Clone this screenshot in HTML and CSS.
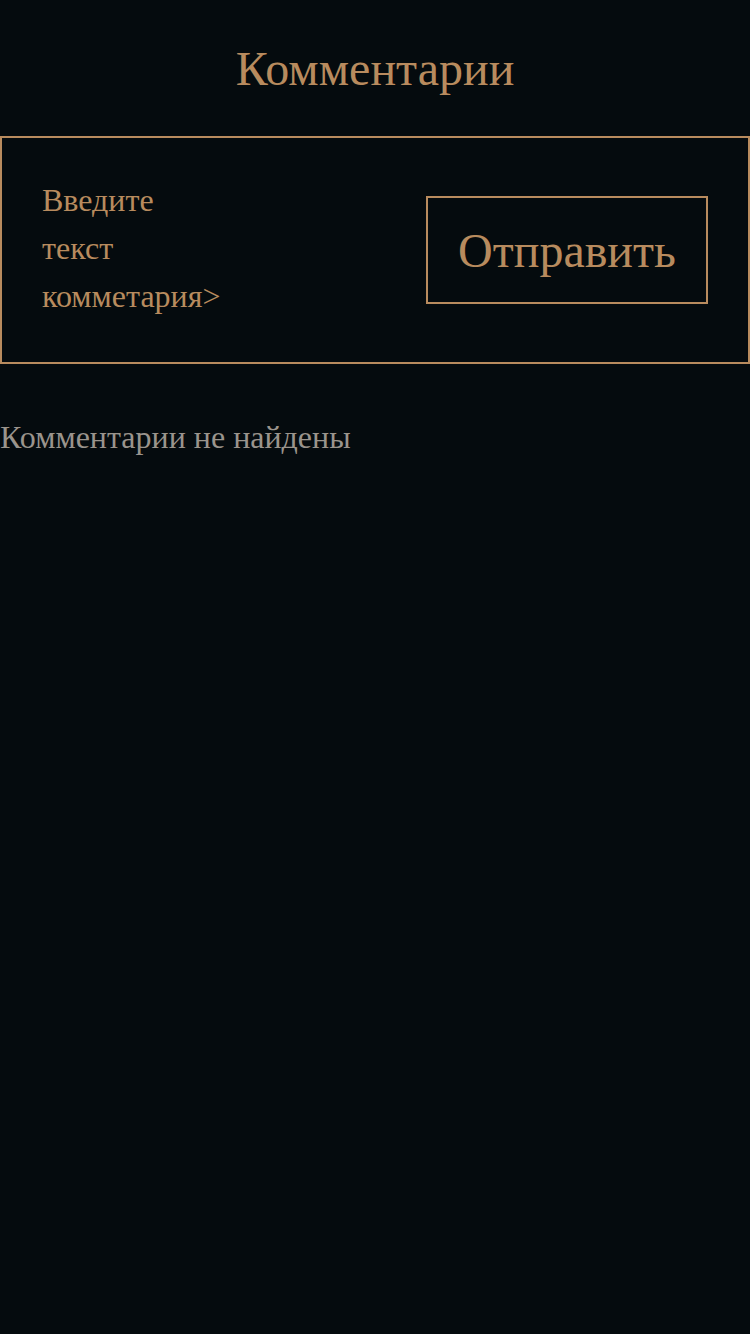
FILE: index.html
```html
<!DOCTYPE html>
<html lang="ru">
<head>
<meta charset="utf-8">
<title>Комментарии</title>
<link rel="stylesheet" href="styles.css">
</head>
<body>
<h1 class="title">Комментарии</h1>
<form class="comment-form">
  <div class="comment-input">Введите текст комметария&gt;</div>
  <button type="button" class="send-btn">Отправить</button>
</form>
<p class="empty">Комментарии не найдены</p>
</body>
</html>
```

FILE: styles.css
```css
html, body {
  margin: 0;
  padding: 0;
  background: #050b0e;
  height: 100%;
}
body {
  font-family: "Liberation Serif", "Times New Roman", serif;
  color: #b88b5e;
}
.title {
  margin: 0;
  height: 136px;
  display: flex;
  align-items: center;
  justify-content: center;
  font-size: 48px;
  font-weight: normal;
  color: #b88b5e;
}
.comment-form {
  margin: 0;
  border: 2px solid #b88b5e;
  padding: 0 40px;
  display: flex;
  align-items: center;
  justify-content: space-between;
  box-sizing: border-box;
  height: 228px;
}
.comment-input {
  width: min-content;
  font-size: 32px;
  line-height: 48px;
  margin-top: -4px;
  color: #b88b5e;
}
.send-btn {
  background: transparent;
  border: 2px solid #b88b5e;
  color: #b88b5e;
  font-family: "Liberation Serif", "Times New Roman", serif;
  font-size: 48px;
  width: 282px;
  height: 108px;
  padding: 0;
}
.empty {
  margin: 55px 0 0;
  font-size: 32px;
  line-height: 36px;
  color: #9a948c;
}
```
